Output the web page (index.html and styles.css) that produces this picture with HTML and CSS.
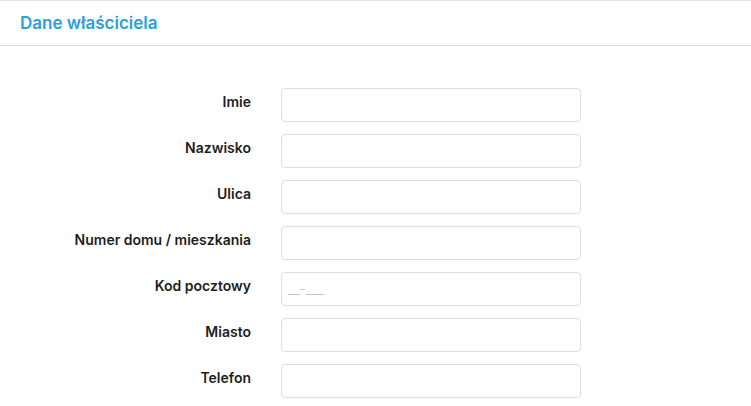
FILE: index.html
```html
<!DOCTYPE html>
<html lang="pl">
<head>
    <meta charset="UTF-8">
    <meta name="viewport" content="width=device-width, initial-scale=1.0">
    <title>Dane właściciela</title>
    <link rel="stylesheet" href="styles.css">
</head>
<body>
    <div class="panel">
        <div class="panel-header">
            <h2>Dane właściciela</h2>
        </div>

        <form class="owner-form">
            <label for="imie">Imie</label>
            <input type="text" id="imie">

            <label for="nazwisko">Nazwisko</label>
            <input type="text" id="nazwisko">

            <label for="ulica">Ulica</label>
            <input type="text" id="ulica">

            <label for="numer">Numer domu / mieszkania</label>
            <input type="text" id="numer">

            <label for="kod">Kod pocztowy</label>
            <input type="text" id="kod" placeholder="__-___">

            <label for="miasto">Miasto</label>
            <input type="text" id="miasto">

            <label for="telefon">Telefon</label>
            <input type="text" id="telefon">
        </form>
    </div>
</body>
</html>
```

FILE: styles.css
```css
body {
    margin: 0;
    font-family: Inter, "Open Sans", sans-serif;
    background: #fff;
    color: #222;
}

.panel {
    border-top: 1px solid #e6e6e6;
}

.panel-header {
    height: 44px;
    padding: 0 20px;
    display: flex;
    align-items: center;
    border-bottom: 1px solid #dcdcdc;
}

.panel-header h2 {
    margin: 0;
    font-size: 17px;
    font-weight: 600;
    color: #2d9fda;
}

.owner-form {
    display: grid;
    grid-template-columns: 251px 300px;
    column-gap: 30px;
    row-gap: 12px;
    padding-top: 42px;
}

.owner-form label {
    text-align: right;
    font-size: 14px;
    font-weight: 600;
    line-height: 17px;
    padding-top: 5px;
    color: #1e1e1e;
}

.owner-form input {
    box-sizing: border-box;
    height: 34px;
    width: 300px;
    margin: 0;
    border: 1px solid #dedede;
    border-radius: 4px;
    padding: 0 6px;
    font-family: inherit;
    font-size: 13px;
    background: #fff;
}

.owner-form input::placeholder {
    color: #c4c4c4;
}
```
